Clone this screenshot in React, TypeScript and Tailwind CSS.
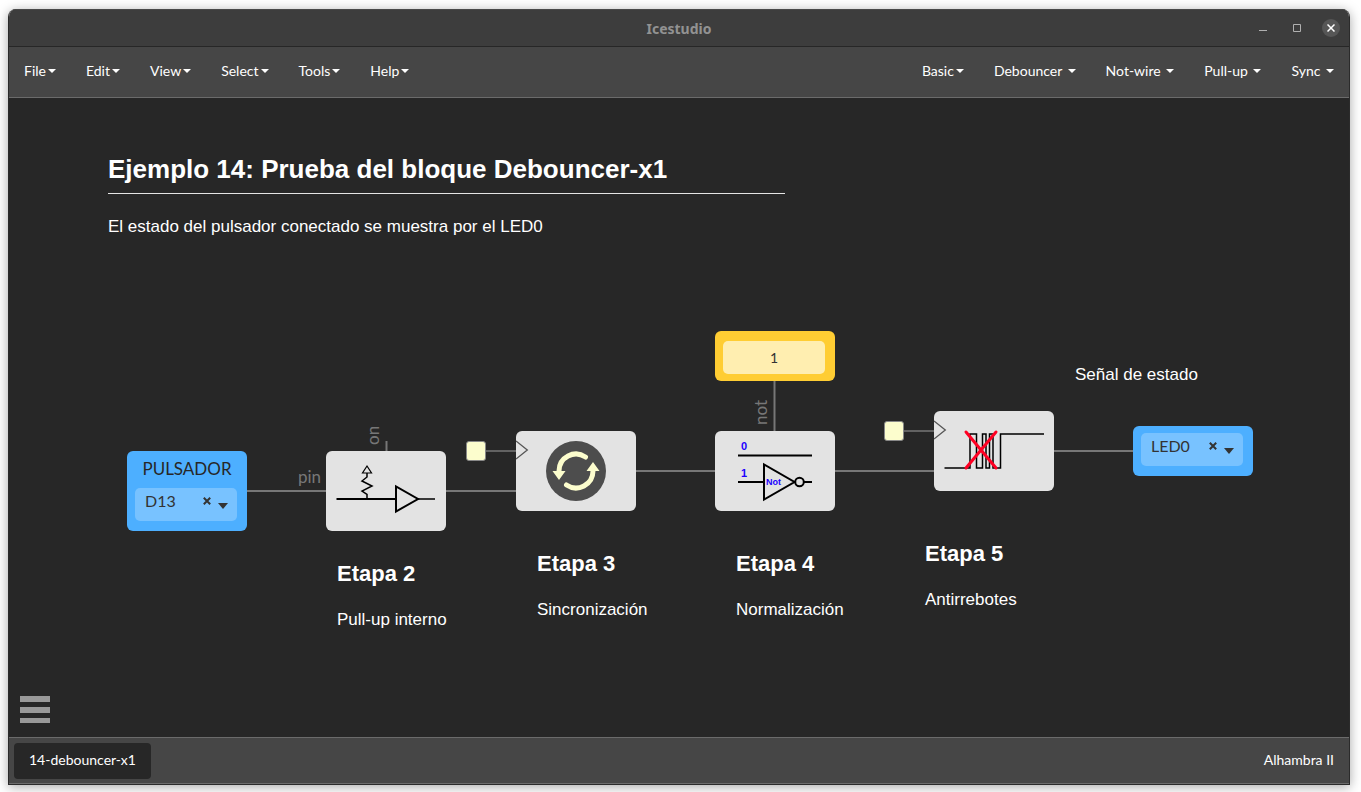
import { useState, type ReactNode } from "react";

const MENUS = ["File", "Edit", "View", "Select", "Tools", "Help"];
const COLLECTIONS = ["Basic", "Debouncer\u00a0", "Not-wire\u00a0", "Pull-up\u00a0", "Sync\u00a0"];

function Caret() {
  return (
    <svg width="8" height="4" viewBox="0 0 8 4" aria-hidden="true">
      <path d="M0 0H8L4 4Z" fill="currentColor" />
    </svg>
  );
}

function MenuButton({ label }: { label: string }) {
  return (
    <button type="button" className="flex items-center gap-0.5 px-[15px] pb-[3px] hover:bg-[#555]">
      {label}
      <Caret />
    </button>
  );
}

function TitleBar() {
  return (
    <header className="grid h-[37px] grid-cols-[1fr_auto_1fr] items-center border-t border-[#4a4a4a] bg-[#3d3d3d]">
      <span />
      <h1 className="pt-0.5 font-['Noto_Sans',sans-serif] text-sm font-bold text-[#929292]">Icestudio</h1>
      <div className="flex items-center justify-end gap-4 pr-[9px] text-[#b0b0b0]">
        <button type="button" aria-label="Minimize" className="flex size-[18px] items-center justify-center">
          <svg width="8" height="8" viewBox="0 0 8 8">
            <path d="M0 6.5H8" stroke="currentColor" />
          </svg>
        </button>
        <button type="button" aria-label="Maximize" className="flex size-[18px] items-center justify-center">
          <svg width="8" height="8" viewBox="0 0 8 8">
            <path d="M.5 .5H7.5V7.5H.5Z" stroke="currentColor" fill="none" />
          </svg>
        </button>
        <button
          type="button"
          aria-label="Close"
          className="flex size-[18px] items-center justify-center rounded-full bg-[#565656] text-white"
        >
          <svg width="8" height="8" viewBox="0 0 8 8">
            <path d="M.5 .5L7.5 7.5M7.5 .5L.5 7.5" stroke="currentColor" strokeWidth="1.5" />
          </svg>
        </button>
      </div>
    </header>
  );
}

function NavBar() {
  return (
    <nav className="flex h-[52px] justify-between border-t border-b border-t-[#272727] border-b-[#6b6b6b] bg-[#464646] text-sm text-white">
      <div className="flex">
        {MENUS.map((m) => (
          <MenuButton key={m} label={m} />
        ))}
      </div>
      <div className="flex">
        {COLLECTIONS.map((m) => (
          <MenuButton key={m} label={m} />
        ))}
      </div>
    </nav>
  );
}

function PinSelect({ id, pin, label }: { id: string; pin: string; label?: string }) {
  const [value, setValue] = useState(pin);
  return (
    <div className="relative ml-2 flex h-[33px] w-[102px] rounded-[5px] bg-[#78c2ff] text-[#333]">
      <select
        id={id}
        aria-label={label}
        value={value}
        onChange={(e) => setValue(e.target.value)}
        className="h-[26px] w-full appearance-none bg-transparent pl-2.5 text-base outline-none"
      >
        <option value={pin}>{pin}</option>
        <option value=""></option>
      </select>
      <button
        type="button"
        aria-label="Clear"
        onClick={() => setValue("")}
        className="absolute top-[7px] right-6 flex size-3 items-center justify-center"
      >
        <svg width="8" height="8" viewBox="0 0 8 8">
          <path d="M.8 .8L7.2 7.2M7.2 .8L.8 7.2" stroke="currentColor" strokeWidth="2" />
        </svg>
      </button>
      <svg className="pointer-events-none absolute top-[15px] right-[9px]" width="10" height="6" viewBox="0 0 10 6">
        <path d="M0 0H10L5 6Z" fill="currentColor" />
      </svg>
    </div>
  );
}

function Block({ place, clock, children }: { place: string; clock?: boolean; children: ReactNode }) {
  return (
    <div className={`absolute h-20 w-[120px] rounded-md bg-[#e3e3e3] ${place}`}>
      <svg width="120" height="80" viewBox="0 0 120 80" fill="none">
        {clock && <path d="M0 10L11.3 19L0 28" stroke="#555" strokeWidth="1.3" />}
        {children}
      </svg>
    </div>
  );
}

function Note({ place, title, text }: { place: string; title?: string; text: string }) {
  return (
    <div className={`absolute font-['Liberation_Sans',sans-serif] whitespace-nowrap text-white ${place}`}>
      {title && <h3 className="mb-5 text-[22px] leading-7 font-bold">{title}</h3>}
      <p className="text-[17px] leading-6">{text}</p>
    </div>
  );
}

function Wires() {
  return (
    <svg className="absolute inset-0 size-full" fill="none">
      <g stroke="#777" strokeWidth="2">
        <path d="M238 393H317M437 393H507M627 373H706M826 373H925M1045 353H1124" />
        <path d="M765.5 283V333M377.5 343V353" />
        <path d="M477 353H507M895 333H925" strokeWidth="1.5" />
      </g>
      <g fill="#777" fontSize="17">
        <text x="289" y="385">pin</text>
        <text transform="translate(370 347) rotate(-90)">on</text>
        <text transform="translate(758 327) rotate(-90)">not</text>
      </g>
    </svg>
  );
}

function Canvas() {
  return (
    <main className="relative min-h-[560px] flex-1 overflow-hidden bg-[#272727]">
      <Wires />

      <section className="absolute top-[55px] left-[99px] w-[677px] font-['Liberation_Sans',sans-serif] text-white">
        <h2 className="border-b border-[#e5e5e5] pb-2 text-[26px] leading-8 font-bold">
          Ejemplo 14: Prueba del bloque Debouncer-x1
        </h2>
        <p className="mt-[21px] text-[17px] leading-6">El estado del pulsador conectado se muestra por el LED0</p>
      </section>

      <div className="absolute top-[353px] left-[118px] h-20 w-[120px] rounded-md bg-[#4dafff]">
        <label htmlFor="pulsador" className="block h-[37px] pt-1.5 text-center text-[17px] leading-6 text-[#272727]">
          PULSADOR
        </label>
        <PinSelect id="pulsador" pin="D13" />
      </div>

      <Block place="top-[353px] left-[317px]">
        <g stroke="#000">
          <path d="M10.5 48H70" strokeWidth="2" />
          <path d="M70 35.5V60.5L92 48Z" strokeWidth="2" />
          <path d="M92 48H109" strokeWidth="1.5" />
          <path d="M41 15L45.5 22H36.5Z" strokeWidth="1.2" />
          <path d="M41 22V26L36 30L46 35L36 40L41 43.5V48" strokeWidth="1.5" />
        </g>
      </Block>

      <div className="absolute top-[343px] left-[457px] size-5 rounded-[3px] border border-[#888] bg-[#fcfdcd]" />
      <Block place="top-[333px] left-[507px]" clock>
        <circle cx="60" cy="40" r="30" fill="#4d4d4d" />
        <g stroke="#fcfdcd" strokeWidth="5" strokeLinecap="round">
          <path d="M69.5 26A17 17 0 0 0 43 40" />
          <path d="M50.5 54A17 17 0 0 0 77 40" />
        </g>
        <path d="M36.5 40H49.5L43 49ZM70.5 40H83.5L77 31Z" fill="#fcfdcd" />
      </Block>

      <div className="absolute top-[233px] left-[706px] h-[50px] w-[120px] rounded-md bg-[#ffcd33] pt-2.5 pl-2">
        <input
          aria-label="not"
          defaultValue="1"
          className="block h-[33px] w-[102px] rounded-[5px] bg-[#ffeeb0] text-center text-sm text-[#333] outline-none"
        />
      </div>
      <Block place="top-[333px] left-[706px]">
        <g stroke="#000" strokeWidth="2">
          <path d="M23 24.5H97M23 51H49M89 51H97" />
          <path d="M49 33.5V68.5L79.5 51Z" />
          <circle cx="84.5" cy="51" r="4.3" />
        </g>
        <g fill="#2000ff" fontFamily="Liberation Sans, sans-serif" fontWeight="700">
          <text x="26" y="19" fontSize="11">0</text>
          <text x="26" y="46" fontSize="11">1</text>
          <text x="51" y="54" fontSize="9">Not</text>
        </g>
      </Block>

      <div className="absolute top-[323px] left-[875px] size-5 rounded-[3px] border border-[#888] bg-[#fcfdcd]" />
      <Block place="top-[313px] left-[925px]" clock>
        <path
          d="M10.5 57H36V23H42.5V57H48.5V23H52V57H55.5V23H59V57H66.5V23H110"
          stroke="#000"
          strokeWidth="1.5"
        />
        <path d="M32 21L62 57M62 21L32 57" stroke="#ff0023" strokeWidth="3" strokeLinecap="round" />
      </Block>

      <div className="absolute top-[328px] left-[1124px] h-[50px] w-[120px] rounded-md bg-[#4dafff] pt-[7px]">
        <PinSelect id="led" pin="LED0" label="LED" />
      </div>

      <Note place="top-[265px] left-[1066px]" text="Señal de estado" />
      <Note place="top-[462px] left-[328px]" title="Etapa 2" text="Pull-up interno" />
      <Note place="top-[452px] left-[528px]" title="Etapa 3" text="Sincronización" />
      <Note place="top-[452px] left-[727px]" title="Etapa 4" text="Normalización" />
      <Note place="top-[442px] left-[916px]" title="Etapa 5" text="Antirrebotes" />

      <button type="button" aria-label="Menu" className="absolute bottom-[14px] left-[11px] flex flex-col gap-[5px]">
        <span className="h-1.5 w-[30px] bg-[#999]" />
        <span className="h-1.5 w-[30px] bg-[#999]" />
        <span className="h-[5px] w-[30px] bg-[#999]" />
      </button>
    </main>
  );
}

export default function App() {
  return (
    <div className="flex min-h-screen bg-white pt-[9px] pr-[11px] pb-[7px] pl-2 font-[Lato,sans-serif]">
      <div className="flex flex-1 flex-col overflow-hidden rounded-t-lg border border-t-0 border-[#2b2b2b] shadow-[0_2px_12px_rgba(0,0,0,0.35)]">
        <TitleBar />
        <NavBar />
        <Canvas />
        <footer className="flex h-[47px] items-center justify-between border-y border-[#6b6b6b] bg-[#464646] pr-[15px] pl-[5px] text-sm text-white">
          <button type="button" className="h-9 rounded bg-[#272727] px-[15px] pb-0.5">
            14-debouncer-x1
          </button>
          <span className="pb-0.5">Alhambra II</span>
        </footer>
      </div>
    </div>
  );
}
